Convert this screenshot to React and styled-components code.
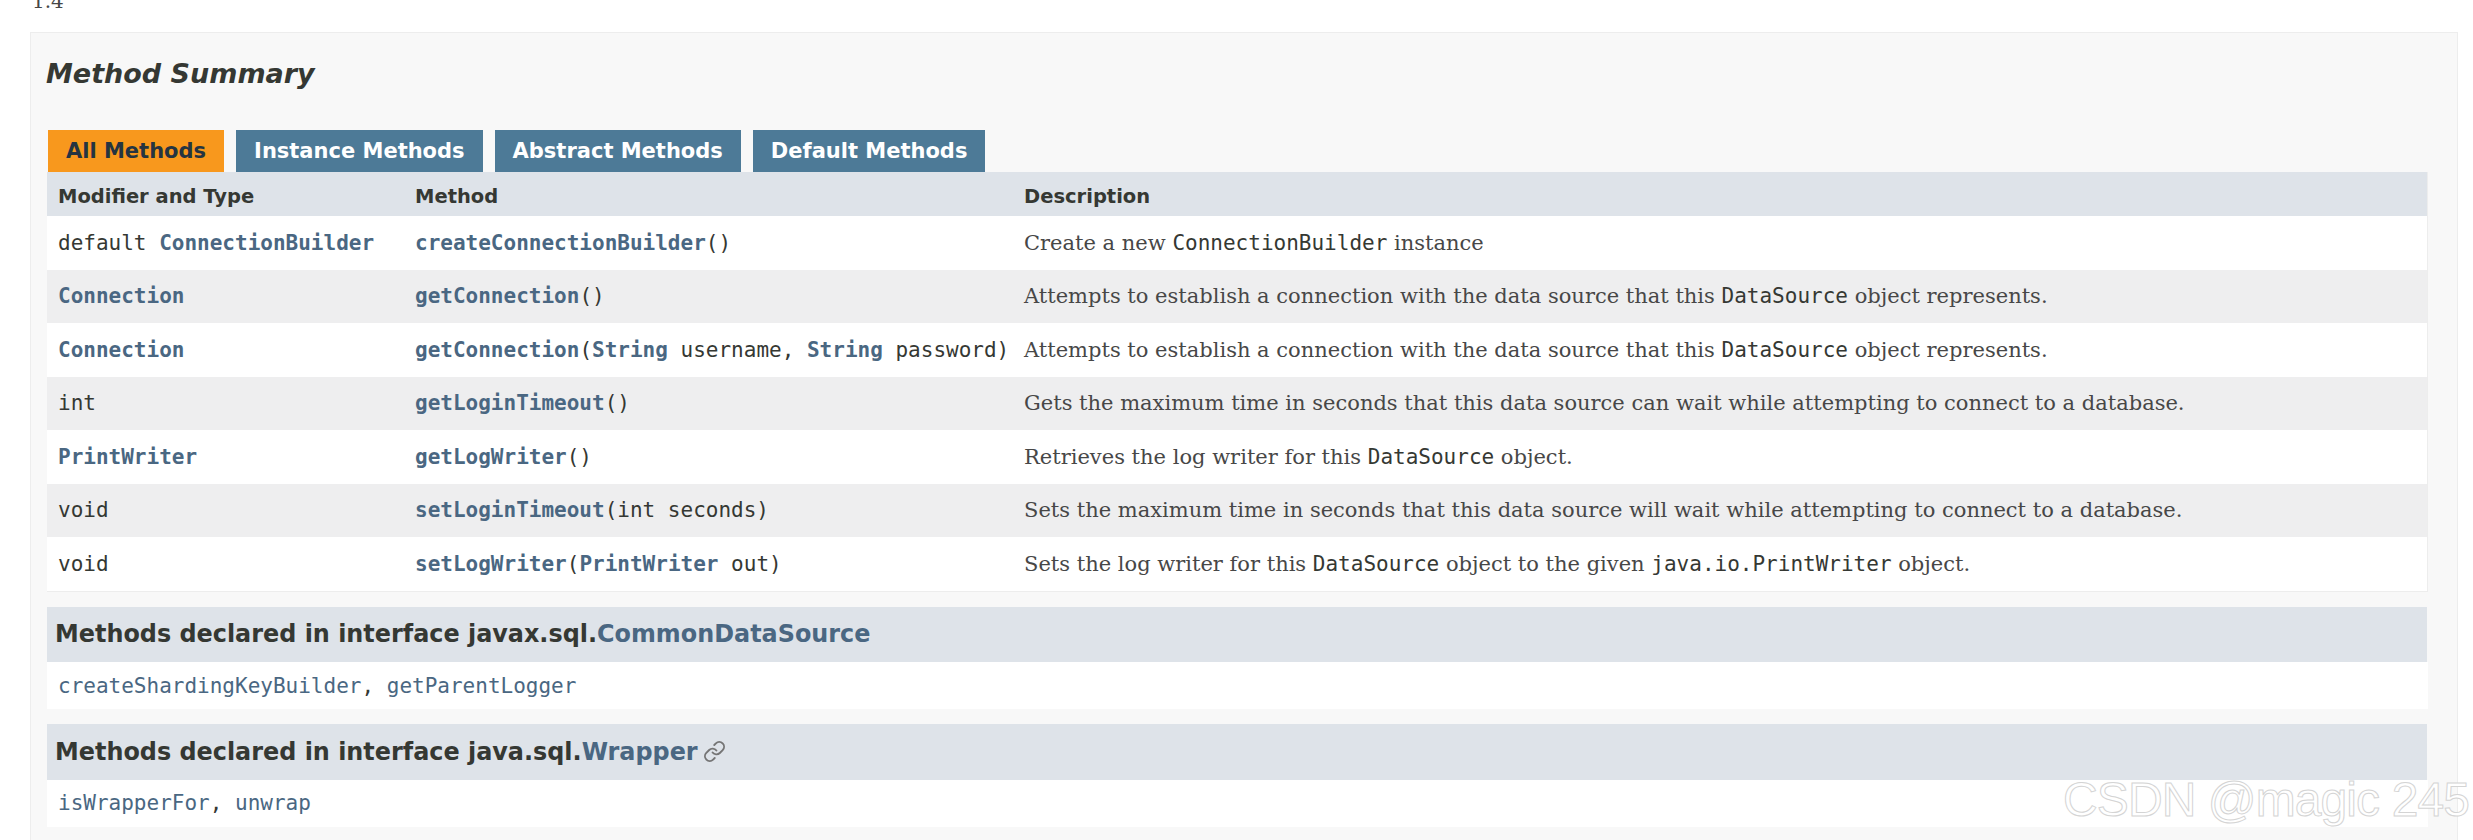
import React from 'react';
import styled, { createGlobalStyle } from 'styled-components';
import { Link as LinkIcon } from 'lucide-react';

const GlobalStyle = createGlobalStyle`
  html, body { margin: 0; padding: 0; background: #fff; overflow: hidden; }
  body { width: 2473px; height: 840px; font-family: "DejaVu Sans", sans-serif; color: #353833; }
`;

const Page = styled.div`
  position: relative;
  height: 840px;
  overflow: hidden;
`;

const TopCut = styled.div`
  height: 32px;
  padding-left: 32px;
  font-family: "DejaVu Serif", serif;
  font-size: 20px;
  line-height: 2px;
  color: #474747;
  overflow: hidden;
`;

const Panel = styled.section`
  margin: 0 15px 0 30px;
  padding: 0 29px 20px 16px;
  height: 808px;
  box-sizing: border-box;
  background: #f8f8f8;
  border: 1px solid #ededed;
  border-bottom: 0;
`;

const Title = styled.h2`
  margin: 0;
  margin-left: -1px;
  padding-top: 25px;
  height: 97px;
  box-sizing: border-box;
  font-size: 27px;
  line-height: 32px;
  font-weight: bold;
  font-style: italic;
  color: #353833;
`;

const Tabs = styled.div`
  display: flex;
  gap: 12px;
  height: 42px;
  margin-left: 1px;
`;

const Tab = styled.button`
  border: 0;
  padding: 0 18px;
  font: bold 21px "DejaVu Sans", sans-serif;
  background: ${(p) => (p.$active ? '#f8981d' : '#4d7a97')};
  color: ${(p) => (p.$active ? '#253441' : '#fff')};
`;

const Table = styled.div`
  display: flex;
  flex-direction: column;
  border-bottom: 1px solid #ededed;
  border-right: 1px solid #ededed;
`;

const Row = styled.div`
  display: grid;
  grid-template-columns: 357px 609px 1fr;
  align-items: center;
  height: ${(p) => (p.$head ? '44px' : '53.5px')};
  background: ${(p) => (p.$head ? '#dee3e9' : p.$alt ? '#eeeeef' : '#fff')};
`;

const HeadCell = styled.div`
  padding: 5px 0 0 11px;
  font-size: 19.5px;
  font-weight: bold;
  color: #353833;
  white-space: nowrap;
`;

const CodeCell = styled.div`
  padding-left: 11px;
  font-family: "DejaVu Sans Mono", monospace;
  font-size: 21px;
  color: #353833;
  white-space: nowrap;
`;

const Link = styled.a`
  color: #4a6782;
  font-weight: ${(p) => (p.$plain ? 'normal' : 'bold')};
`;

const DescCell = styled.div`
  padding-left: 11px;
  font-family: "DejaVu Serif", serif;
  font-size: 21px;
  color: #474747;
  white-space: nowrap;
`;

const Code = styled.code`
  font-family: "DejaVu Sans Mono", monospace;
  color: #353833;
`;

const Inherited = styled.div`
  margin-top: 15px;
  margin-right: 1px;
`;

const InheritedHead = styled.h3`
  margin: 0;
  height: 55.5px;
  padding-left: 8px;
  display: flex;
  align-items: center;
  gap: 5px;
  background: #dee3e9;
  font-size: 23.9px;
  font-weight: bold;
  color: #353833;
  white-space: pre;
`;

const InheritedBody = styled.div`
  height: 47px;
  margin-right: -1px;
  padding-left: 11px;
  display: flex;
  align-items: center;
  background: #fff;
  font-family: "DejaVu Sans Mono", monospace;
  font-size: 21px;
  white-space: pre;
`;

const Watermark = styled.div`
  position: absolute;
  left: 2063px;
  top: 772px;
  font-family: "Liberation Sans", sans-serif;
  font-size: 48px;
  letter-spacing: -0.9px;
  line-height: 56px;
  white-space: nowrap;
  color: #fff;
  -webkit-text-stroke: 1px #d4d4d4;
`;

const rows = [
  {
    type: <>default <Link>ConnectionBuilder</Link></>,
    method: <><Link>createConnectionBuilder</Link>()</>,
    desc: <>Create a new <Code>ConnectionBuilder</Code> instance</>,
  },
  {
    type: <Link>Connection</Link>,
    method: <><Link>getConnection</Link>()</>,
    desc: <>Attempts to establish a connection with the data source that this <Code>DataSource</Code> object represents.</>,
  },
  {
    type: <Link>Connection</Link>,
    method: <><Link>getConnection</Link>(<Link>String</Link> username, <Link>String</Link> password)</>,
    desc: <>Attempts to establish a connection with the data source that this <Code>DataSource</Code> object represents.</>,
  },
  {
    type: 'int',
    method: <><Link>getLoginTimeout</Link>()</>,
    desc: 'Gets the maximum time in seconds that this data source can wait while attempting to connect to a database.',
  },
  {
    type: <Link>PrintWriter</Link>,
    method: <><Link>getLogWriter</Link>()</>,
    desc: <>Retrieves the log writer for this <Code>DataSource</Code> object.</>,
  },
  {
    type: 'void',
    method: <><Link>setLoginTimeout</Link>(int seconds)</>,
    desc: 'Sets the maximum time in seconds that this data source will wait while attempting to connect to a database.',
  },
  {
    type: 'void',
    method: <><Link>setLogWriter</Link>(<Link>PrintWriter</Link> out)</>,
    desc: <>Sets the log writer for this <Code>DataSource</Code> object to the given <Code>java.io.PrintWriter</Code> object.</>,
  },
];

const tabs = ['All Methods', 'Instance Methods', 'Abstract Methods', 'Default Methods'];

export default function App() {
  return (
    <Page>
      <GlobalStyle />
      <TopCut>1.4</TopCut>
      <Panel>
        <Title>Method Summary</Title>
        <Tabs>
          {tabs.map((t, i) => (
            <Tab key={t} $active={i === 0}>{t}</Tab>
          ))}
        </Tabs>
        <Table>
          <Row $head>
            <HeadCell>Modifier and Type</HeadCell>
            <HeadCell>Method</HeadCell>
            <HeadCell>Description</HeadCell>
          </Row>
          {rows.map((r, i) => (
            <Row key={i} $alt={i % 2 === 1}>
              <CodeCell>{r.type}</CodeCell>
              <CodeCell>{r.method}</CodeCell>
              <DescCell>{r.desc}</DescCell>
            </Row>
          ))}
        </Table>
        <Inherited>
          <InheritedHead><span>Methods declared in interface javax.sql.<Link>CommonDataSource</Link></span></InheritedHead>
          <InheritedBody><Link $plain>createShardingKeyBuilder</Link>, <Link $plain>getParentLogger</Link></InheritedBody>
        </Inherited>
        <Inherited>
          <InheritedHead>
            <span>Methods declared in interface java.sql.<Link>Wrapper</Link></span>
            <LinkIcon size={23} color="#757575" strokeWidth={2} />
          </InheritedHead>
          <InheritedBody><Link $plain>isWrapperFor</Link>, <Link $plain>unwrap</Link></InheritedBody>
        </Inherited>
      </Panel>
      <Watermark>CSDN @magic 245</Watermark>
    </Page>
  );
}
